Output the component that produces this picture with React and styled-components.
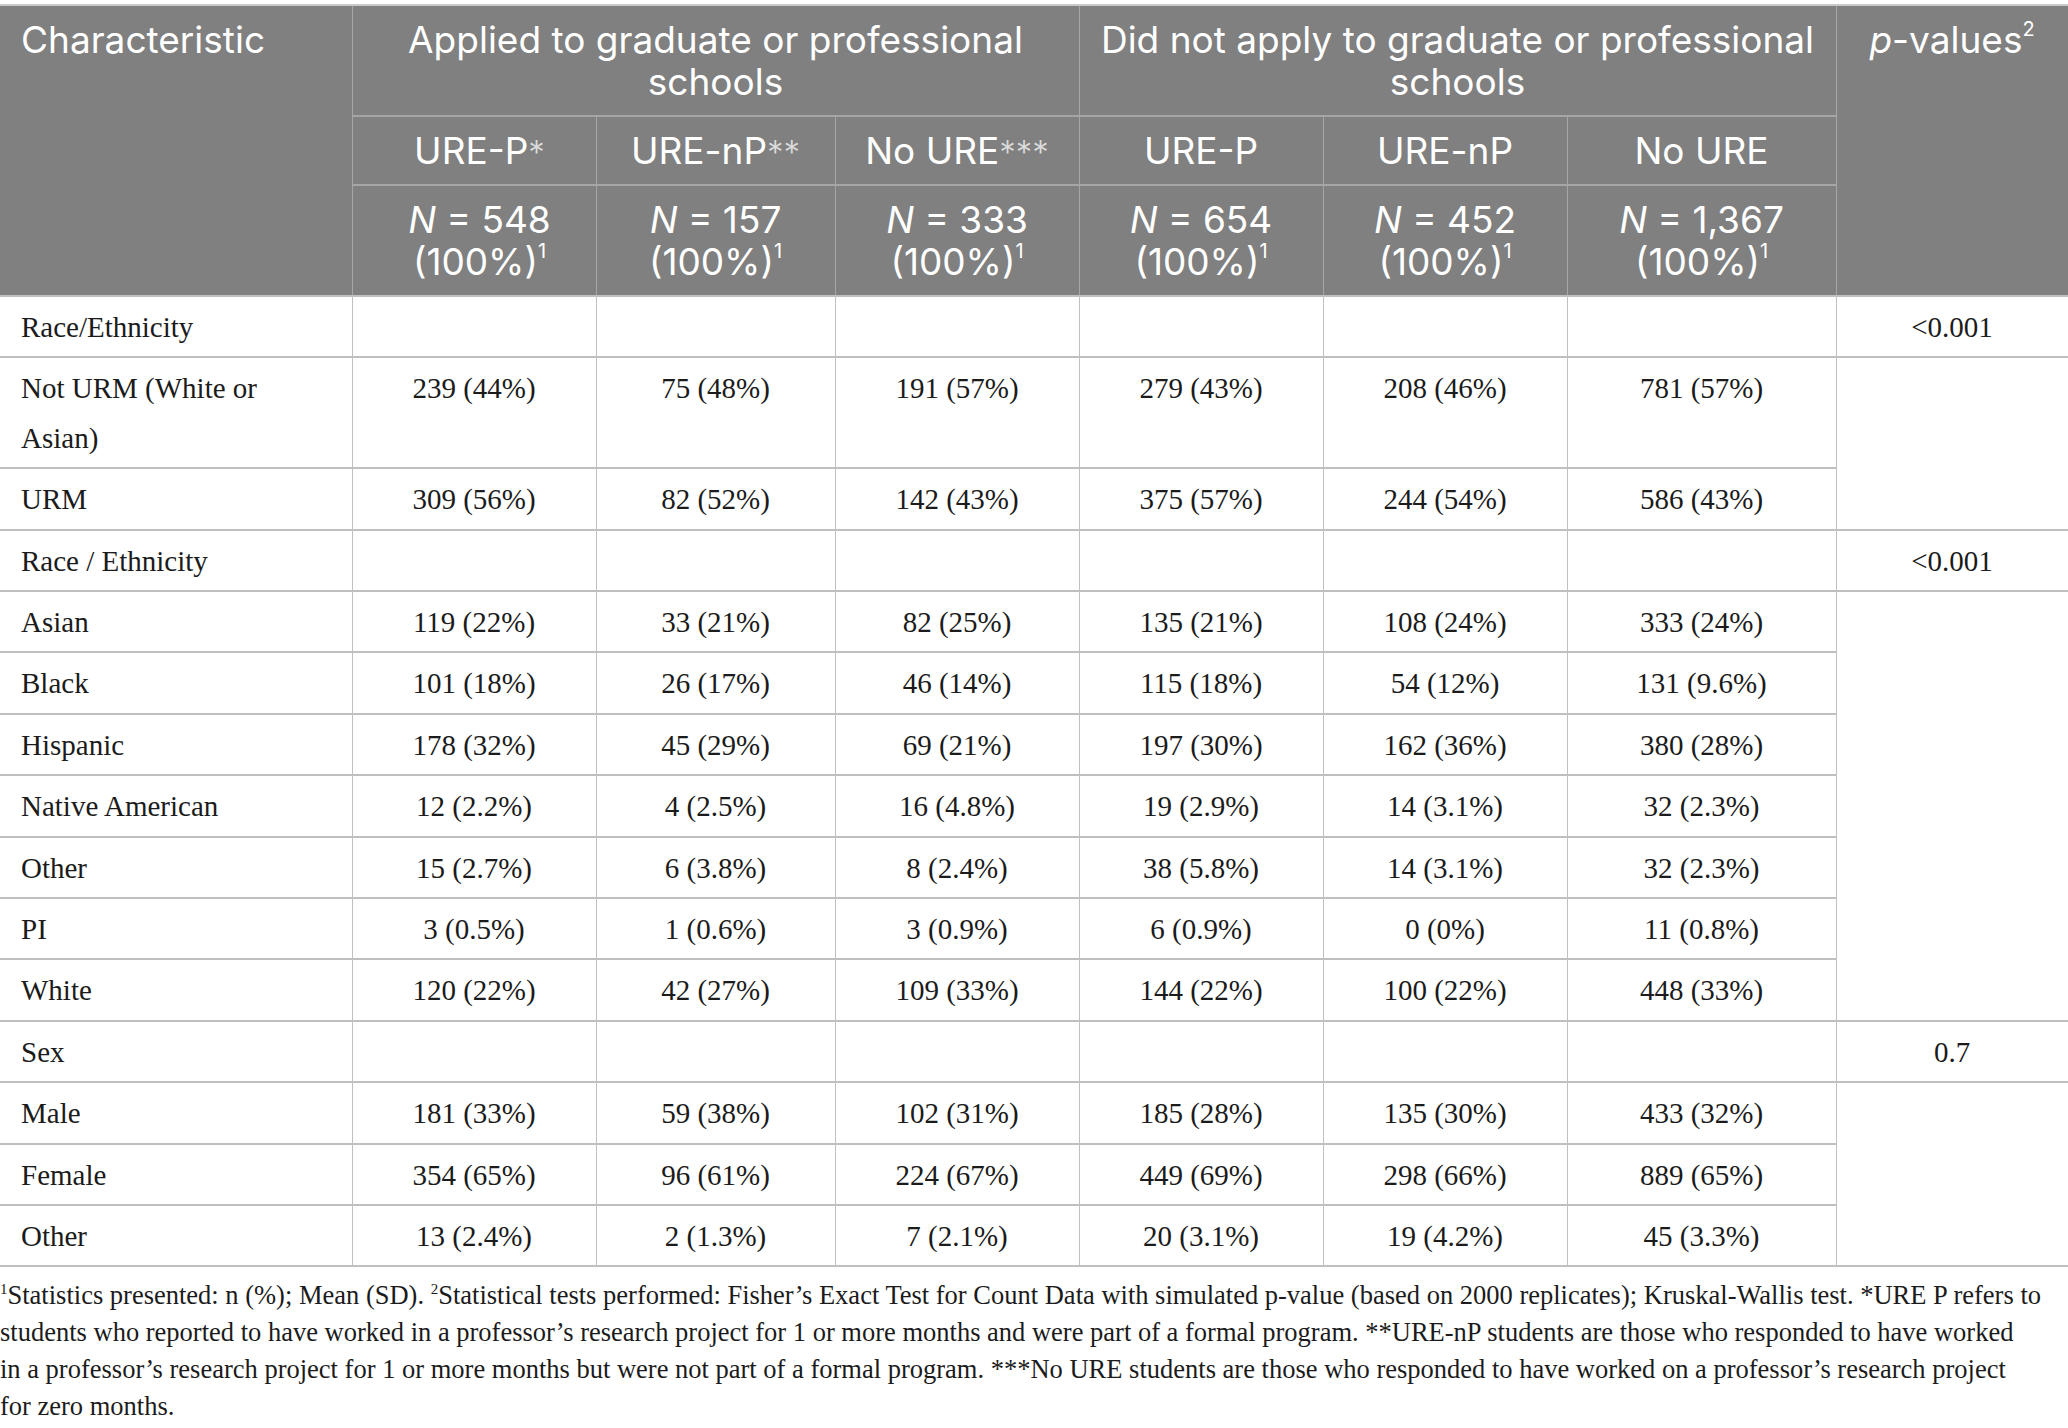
import styled, { createGlobalStyle } from 'styled-components';

const GlobalStyle = createGlobalStyle`
    html, body {
        margin: 0;
        padding: 0;
        background: #ffffff;
    }
`;

const columns = [
    { label: 'URE-P', marks: '*', n: '548' },
    { label: 'URE-nP', marks: '**', n: '157' },
    { label: 'No URE', marks: '***', n: '333' },
    { label: 'URE-P', n: '654' },
    { label: 'URE-nP', n: '452' },
    { label: 'No URE', n: '1,367' },
];

const colWidths = [352, 244, 239, 244, 244, 244, 269, 232];

const groups = [
    {
        label: 'Race/Ethnicity',
        p: '<0.001',
        rows: [
            ['Not URM (White or Asian)', '239 (44%)', '75 (48%)', '191 (57%)', '279 (43%)', '208 (46%)', '781 (57%)'],
            ['URM', '309 (56%)', '82 (52%)', '142 (43%)', '375 (57%)', '244 (54%)', '586 (43%)'],
        ],
    },
    {
        label: 'Race / Ethnicity',
        p: '<0.001',
        rows: [
            ['Asian', '119 (22%)', '33 (21%)', '82 (25%)', '135 (21%)', '108 (24%)', '333 (24%)'],
            ['Black', '101 (18%)', '26 (17%)', '46 (14%)', '115 (18%)', '54 (12%)', '131 (9.6%)'],
            ['Hispanic', '178 (32%)', '45 (29%)', '69 (21%)', '197 (30%)', '162 (36%)', '380 (28%)'],
            ['Native American', '12 (2.2%)', '4 (2.5%)', '16 (4.8%)', '19 (2.9%)', '14 (3.1%)', '32 (2.3%)'],
            ['Other', '15 (2.7%)', '6 (3.8%)', '8 (2.4%)', '38 (5.8%)', '14 (3.1%)', '32 (2.3%)'],
            ['PI', '3 (0.5%)', '1 (0.6%)', '3 (0.9%)', '6 (0.9%)', '0 (0%)', '11 (0.8%)'],
            ['White', '120 (22%)', '42 (27%)', '109 (33%)', '144 (22%)', '100 (22%)', '448 (33%)'],
        ],
    },
    {
        label: 'Sex',
        p: '0.7',
        rows: [
            ['Male', '181 (33%)', '59 (38%)', '102 (31%)', '185 (28%)', '135 (30%)', '433 (32%)'],
            ['Female', '354 (65%)', '96 (61%)', '224 (67%)', '449 (69%)', '298 (66%)', '889 (65%)'],
            ['Other', '13 (2.4%)', '2 (1.3%)', '7 (2.1%)', '20 (3.1%)', '19 (4.2%)', '45 (3.3%)'],
        ],
    },
];

const App = () => {
    // footnote kept in the printed line breaks of the source
    const notes = [
        <><FootSup>1</FootSup>Statistics presented: n (%); Mean (SD). <FootSup>2</FootSup>Statistical tests performed: Fisher’s Exact Test for Count Data with simulated p-value (based on 2000 replicates); Kruskal-Wallis test. *URE P refers to</>,
        'students who reported to have worked in a professor’s research project for 1 or more months and were part of a formal program. **URE-nP students are those who responded to have worked',
        'in a professor’s research project for 1 or more months but were not part of a formal program. ***No URE students are those who responded to have worked on a professor’s research project',
        'for zero months.',
    ];

    return (
        <>
            <GlobalStyle />
            <Page>
                <StyledTable>
                    <colgroup>
                        {colWidths.map((w, i) => <col key={i} style={{ width: w }} />)}
                    </colgroup>
                    <thead>
                        <tr>
                            <HeadCell rowSpan={3} $align='left'>Characteristic</HeadCell>
                            <HeadCell colSpan={3}>Applied to graduate or professional schools</HeadCell>
                            <HeadCell colSpan={3}>Did not apply to graduate or professional schools</HeadCell>
                            <HeadCell rowSpan={3}><i>p</i>-values<Sup>2</Sup></HeadCell>
                        </tr>
                        <tr>
                            {columns.map((c, i) => (
                                <HeadCell key={i}>{c.label}{c.marks && <Marks>{c.marks}</Marks>}</HeadCell>
                            ))}
                        </tr>
                        <tr>
                            {columns.map((c, i) => (
                                <HeadCell key={i}><i>N</i> = {c.n}<br />(100%)<Sup>1</Sup></HeadCell>
                            ))}
                        </tr>
                    </thead>
                    <tbody>
                        {groups.map((g) => [
                            <tr key={g.label}>
                                <BodyCell $align='left'>{g.label}</BodyCell>
                                {columns.map((_, i) => <BodyCell key={i} />)}
                                <BodyCell>{g.p}</BodyCell>
                            </tr>,
                            ...g.rows.map((r, ri) => (
                                <tr key={g.label + ri}>
                                    {r.map((v, ci) => (
                                        <BodyCell key={ci} $align={ci === 0 ? 'left' : 'center'}>{v}</BodyCell>
                                    ))}
                                    {ri === 0 && <BodyCell rowSpan={g.rows.length} />}
                                </tr>
                            )),
                        ])}
                    </tbody>
                </StyledTable>
                <Footnote>
                    {notes.map((n, i) => <FootLine key={i}>{n}</FootLine>)}
                </Footnote>
            </Page>
        </>
    );
}

const Page = styled.div`
    width: 2068px;
    padding-top: 4px;
    display: flex;
    flex-direction: column;
    gap: 10px;
`;

const StyledTable = styled.table`
    width: 2068px;
    table-layout: fixed;
    border-collapse: collapse;
    border-top: 2px solid #c9c9c9;
    border-right: 1px solid #c0c0c0;
    border-bottom: 2px solid #c0c0c0;
`;

const HeadCell = styled.th`
    background: #7f807f;
    color: #ffffff;
    font-family: Inter, Lato, sans-serif;
    font-weight: 400;
    font-size: 37px;
    line-height: 42px;
    padding: 13px 10px 11.5px;
    text-align: ${p => p.$align || 'center'};
    vertical-align: top;
    border: 1px solid #a5a6a5;
    border-top: 2px solid #a5a6a5;
    &:first-child {
        border-left: none;
        padding-left: 21px;
    }
    tr:first-child > & {
        border-top: none;
    }
`;

const Marks = styled.span`
    font-weight: 300;
    font-size: 33px;
    color: #dcdcdc;
`;

const Sup = styled.sup`
    font-size: 20px;
    line-height: 0;
    vertical-align: 17px;
`;

const BodyCell = styled.td`
    font-family: 'Liberation Serif', 'Times New Roman', serif;
    font-size: 29px;
    line-height: 50px;
    color: #1b1b1b;
    padding: 5px 21px 4.4px;
    text-align: ${p => p.$align || 'center'};
    vertical-align: top;
    border: 1px solid #c0c0c0;
    border-top: 2px solid #c0c0c0;
    border-bottom: 2px solid #c0c0c0;
    &:first-child {
        border-left: none;
    }
`;

const Footnote = styled.div`
    display: flex;
    flex-direction: column;
    font-family: 'Liberation Serif', 'Times New Roman', serif;
    font-size: 26.5px;
    line-height: 37px;
    color: #1b1b1b;
`;

const FootLine = styled.span`
    white-space: nowrap;
`;

const FootSup = styled.sup`
    font-size: 15px;
    line-height: 0;
    vertical-align: 10px;
`;

export default App
